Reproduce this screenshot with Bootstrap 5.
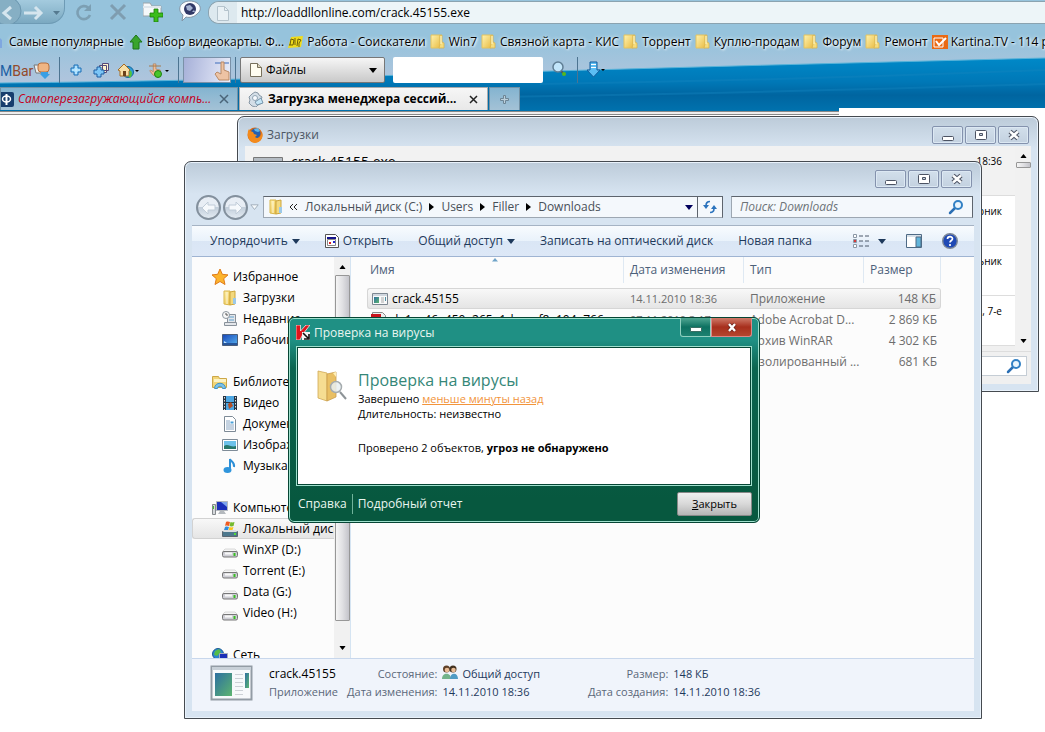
<!DOCTYPE html>
<html lang="ru">
<head>
<meta charset="utf-8">
<meta name="viewport" content="width=device-width, initial-scale=1">
<title>Загрузка менеджера сессий</title>
<link rel="stylesheet" href="https://cdn.jsdelivr.net/npm/bootstrap@5.3.0/dist/css/bootstrap.min.css">
<style>
body{font:12px/16px "Open Sans","Noto Sans",sans-serif;color:#000;background:#fff;min-height:100vh;overflow:hidden}
svg{display:block;flex:none}
button,input,select{font:inherit}
button{background:none;border:0;padding:0;color:inherit}
a{color:inherit;text-decoration:none}
.i16{width:16px;height:16px}
.desk{height:100vh;min-height:732px;overflow:hidden}

/* browser chrome */
.chrome{height:111px;background:linear-gradient(#96c3dc 0 40px,#b2c5dd 85px)}
.chrome .wave{inset:0;width:100%;height:100%}
.torn{right:0;bottom:0;width:19.7%;height:3px;background:#fff}
.navrow{height:27px}
.histpill{width:65px;height:28px;margin-top:-4px;border:1px solid #6e9bb5;border-left:0;border-radius:0 0 16px 0/0 0 16px 0;background:linear-gradient(#a9cfe2,#7ba9c1)}
.navtools{width:143px}
.url{height:23px;border:1px solid #8ba3b0;border-right:0;border-radius:11px 0 0 11px;background:#edf5f8;margin-top:1px}
.urlicon{width:28px;height:21px;background:#dde9ef;border-radius:10px 0 0 10px}
.url input,.plain{border:0;outline:0;background:transparent;padding:0;min-width:0}
.marks{height:30px;gap:4px;text-shadow:0 0 4px #fff,1px 1px 2px #fff}
.marks a{gap:3px}
.tools{height:30px}
.vsep{width:1px;height:26px;background:#4d7491;border-right:0}
.logo{font:14px/20px Roboto,sans-serif;width:33px}
.thumb{width:48px;height:26px;border:1px solid #7a91a8;background:linear-gradient(100deg,#a6b0d8,#e9edfa)}
.filepick{width:145px;height:26px}
.filepick select{appearance:none;width:100%;height:26px;padding:0 0 0 25px;border:1px solid #777;border-radius:2px;background:linear-gradient(#f6f6f6,#c9c9c9);color:#000}
.filepick .leaf{top:5px}
.filepick .caret{top:11px}
.quick{width:150px;height:26px;border:0;border-radius:2px;background:#fff}
.tabstrip{height:23px;gap:1px}
.tab{height:23px;border:1px solid #7191a5;border-bottom:0;background:linear-gradient(#84b4d0,#a4c2d6)}
.tab.on{background:linear-gradient(#f6f6f6,#e8e8e8);border-color:#aaa;font-weight:700}
.t1{width:238px}.t2{width:249px}.t3{width:31px}
.understrip{width:80.3%;height:4px;background:#eee;border-top:1px solid #888;border-bottom:1px solid #888}

/* aero windows */
.win{border:1px solid #454a50;border-radius:7px 7px 0 0;background:linear-gradient(#bccbd9,#d7e4f1 32px);box-shadow:inset 0 0 0 1px #e9f2fb;padding:0 7px 7px}
.cap{width:31px;height:18px;border:1px solid #8492ad;border-radius:2px;background:linear-gradient(#d2dfeb,#c3d1e0);box-shadow:inset 0 0 0 1px #dce8f3}
.caps{gap:2px;margin-right:2px}
.dl{left:237px;right:6px;top:116px;height:276px}
.dl .titlebar{height:29px;color:#4c5663;padding:7px 0 0 2px}
.dlbody{height:238px;background:#f0f0f0}
.dllist{height:206px;border-bottom:1px solid #ddd}
.dlrow{height:50px;border-bottom:1px solid #ddd;background:#fff;padding:7px 13px 0 8px;font-size:10px}
.dlrow:first-child{background:#f2f2f2}
.dlname{font-size:14px;line-height:18px}
.dlfind{width:240px;height:20px;border:1px solid #c5cdd5;background:#fff}
.vbar{width:16px;background:#f1f1f1}
.grip{width:15px;border:1px solid #979797;border-radius:1px;background:linear-gradient(90deg,#f5f5f5,#e0e0e3 50%,#c4c4ca)}

.ex{left:184px;right:63px;top:161px}
.ex .titlebar{height:34px;padding-top:8px}
.addrrow{height:22px;padding-right:1px}
.round{width:25px;height:25px;border:2px solid #83909d;border-radius:50%;background:linear-gradient(#e8eef5 45%,#c3cfdb 50%,#e2eaf2)}
.field{height:22px;border:1px solid #9da7b2;border-top-color:#5d646d;border-right-color:#5d646d;background:#f4f8fc;color:#484f58}
.crumbs{gap:7px}
.find{flex:0 0 242px}
.find input{font-style:italic;color:#5f666e}
.find input::placeholder{color:#6d7378;opacity:1}
.cmd{height:32px;margin-top:7px;padding:0 16px 0 18px;border-top:1px solid #a5b3c4;border-bottom:1px solid #9fb4d2;background:linear-gradient(#f8fbfe,#e9f2fb 50%,#dae6f5 51%,#dde8f7);color:#1e395b}
.panes{height:401px;background:#fcfcfc}
.side{width:142px;padding-top:9px}
.side a{height:21px;gap:5px;white-space:nowrap;padding-left:20px}
.side a.sub{padding-left:30px}
.side a.sel{background:linear-gradient(#f8f8f8,#e5e5e5);border:1px solid #d2d2d2;border-right:0;border-radius:3px 0 0 3px;padding-left:29px}
.side .gap{height:21px}
.side + .vbar{padding:8px 0}
.side + .vbar .grip{margin-top:6px;height:346px}
.listing{border-left:1px solid #d5e4f2;padding-left:16px}
.files{width:574px;table-layout:fixed;border-collapse:separate;border-spacing:0;color:#6d6d6d}
.files th{height:26px;font-weight:400;color:#4c607a;border-right:1px solid #dfe9f3;padding:0 6px 0 6px}
.files th:first-child{padding-left:3px}
.files td{height:21px;padding:0 6px;white-space:nowrap;overflow:hidden}
.files td:first-child{padding-left:4px;color:#000}
.files td:nth-child(2){font-size:11px}
.files td:last-child{text-align:right;padding:0 4px 0 0}
.files .space td{height:5px}
.files .sel td{border:solid #d6d6d6;border-width:1px 0;background:linear-gradient(#f8f8f8,#e5e5e5)}
.files .sel td:first-child{border-left-width:1px;border-radius:3px 0 0 3px}
.files .sel td:last-child{border-right-width:1px;border-radius:0 3px 3px 0}
.info{height:53px;border-top:1px solid #c8d7ec;background:#f0f4fb;color:#5a6779;padding:6px 0 0 17px;font-size:11px}
.info dl,.info dd,.info dt{margin:0;font-weight:400}
.info dl{display:grid;grid-template-columns:auto auto;column-gap:5px;align-content:start;line-height:18px}
.info dt{text-align:right}
.info dd{color:#1e395b}
.info .what{width:78px;line-height:18px}
.info .fname{font-size:12px;color:#000}

/* antivirus dialog */
.av{left:288px;top:317px;width:472px;border:1px solid #064534;border-radius:6px;background:linear-gradient(#1f9084 0 22px,#0b6550 50px,#07583f 180px);box-shadow:inset 0 0 0 1px #9fe0cd;padding:0 7px;color:#e9f6f0}
.av .titlebar{height:28px;padding:1px 0 0}
.avmin,.avx{height:19px;border:1px solid #8fd0c0;border-top:0;margin-top:-1px}
.avmin{width:31px;background:linear-gradient(#4fa692,#0d7161 50%,#1d8171);border-radius:0 0 0 3px}
.avx{width:41px;background:linear-gradient(#cf7a69,#a72f1c 50%,#b5462e);border-color:#d88;border-radius:0 0 3px 0}
.avbody{height:140px;border:1px solid #9fe0cd;outline:1px solid #064534;outline-offset:-2px;background:#fff;color:#000;font-size:11px;line-height:15px;padding:22px 0 0 19px}
.avbody h1{font-size:16px;line-height:22px;font-weight:400;color:#358778;margin:0}
.avbody a{color:#f2943b;text-decoration:underline}
.avbody p{margin:19px 0 0}
.avfoot{height:36px;padding:0 0 1px 2px;gap:5px}
.avfoot .bar{width:1px;height:20px;background:#70b39b}
.avclose{width:75px;height:24px;border:1px solid #888;border-radius:2px;background:linear-gradient(#f0f0f0,#d8d8d8 50%,#b5b5b5);color:#000;font-size:11px}
</style>
</head>
<body>
<svg width="0" height="0" class="position-absolute" aria-hidden="true">
<defs>
<linearGradient id="gy" x2="1" y2="1"><stop stop-color="#fff3b0"/><stop offset="1" stop-color="#e9bd45"/></linearGradient>
<linearGradient id="gb" x2="1" y2="1"><stop stop-color="#1746b8"/><stop offset="1" stop-color="#58b4f0"/></linearGradient>
<linearGradient id="gw" x2="0" y2="1"><stop stop-color="#0089c8"/><stop offset=".45" stop-color="#0078b7"/><stop offset=".7" stop-color="#0065a0"/><stop offset="1" stop-color="#0072ae"/></linearGradient>
<linearGradient id="gg" x2="1" y2="1"><stop stop-color="#2d6fa0"/><stop offset="1" stop-color="#5cb470"/></linearGradient>
</defs>
<symbol id="folder" viewBox="0 0 16 16"><path d="M1 1h9v13H1z" fill="url(#gy)" stroke="#e3c25e"/><path d="M10 1h2v7l2 1v5H9l1-4z" fill="#f6dc7c" stroke="#d9b34c" stroke-width=".8"/><path d="M11 2v8" stroke="#fff8cc"/></symbol>
<symbol id="folderb" viewBox="0 0 16 16"><path d="M2 1h6v14l-6-1z" fill="url(#gy)" stroke="#d9b64a"/><path d="M8 2l5-1v13l-5 1z" fill="#f3d97e" stroke="#cda63c"/><path d="M11 8h3v6h-3z" fill="#9cc9e8"/><path d="M5 2v12" stroke="#fffbe0"/></symbol>
<symbol id="page" viewBox="0 0 16 16"><path d="M2.500 1.500h7l4 4v9h-11z" fill="#fffdf0" stroke="#77705c"/><path d="M9.500 1.500v4h4" fill="#ddd6bd" stroke="#77705c"/></symbol>
<symbol id="drive" viewBox="0 0 16 16"><path d="M3 7h10l2.500 2.500h-15z" fill="#f5f5f5" stroke="#ccc" stroke-width=".7"/><rect x=".5" y="9.500" width="15" height="5.500" rx="1.500" fill="#cfcfd6" stroke="#777"/><path d="M3 11.500h7" stroke="#f8f8f8" stroke-width="2"/><path d="M11.500 11h2v3h-2z" fill="#38bd22"/></symbol>
<symbol id="app" viewBox="0 0 16 16"><path d="M.5 2.500h15v11H.5z" fill="#f8f9fa" stroke="#7d8791"/><path d="M1 3h14v2H1z" fill="#cfd6de"/><path d="M2 6h5v6H2z" fill="url(#gg)"/><path d="M9 7h3M9 9h3M9 11h3" stroke="#aaa"/><path d="M13 6h1v4h-1z" fill="#4f8fa0"/></symbol>
<symbol id="mag" viewBox="0 0 16 16"><path d="M2 14l5-5" stroke="#2b6fb4" stroke-width="2.500" stroke-linecap="round"/><circle cx="10" cy="6" r="4" fill="#eaf5fd" stroke="#3280c4" stroke-width="2"/></symbol>
<symbol id="plus" viewBox="0 0 16 16"><path d="M6 3h4v3h3v4h-3v3H6v-3H3V6h3z" fill="#8fd2fb" stroke="#1c6fb5"/><path d="M8 4v8M4 8h8" stroke="#d5f1ff"/></symbol>
<symbol id="cmin" viewBox="0 0 12 12"><rect x=".5" y="7.500" width="11" height="4" rx="1" fill="#fff" stroke="#4c5363"/></symbol>
<symbol id="cmax" viewBox="0 0 12 12"><rect x=".5" y="1.500" width="11" height="9" rx="1" fill="#fff" stroke="#4c5363"/><path d="M4.500 4.500h3v2h-3z" fill="#c7d3e0" stroke="#4c5363"/></symbol>
<symbol id="cx" viewBox="0 0 12 12"><path d="M2 2.500l8 7M10 2.500l-8 7" stroke="#4c5363" stroke-width="4.600"/><path d="M2 2.500l8 7M10 2.500l-8 7" stroke="#fff" stroke-width="2.500"/></symbol>
<symbol id="dn" viewBox="0 0 8 5"><path d="M0 0h8L4 5z" fill="currentColor"/></symbol>
<symbol id="up" viewBox="0 0 8 5"><path d="M0 5h8L4 0z" fill="currentColor"/></symbol>
<symbol id="rt" viewBox="0 0 5 8"><path d="M0 0l5 4-5 4z" fill="#000"/></symbol>
<symbol id="hand" viewBox="0 0 16 16"><path d="M6 1h3v6l5 1v6H6L2 9l1-1 3 2z" fill="#f0bf98" stroke="#b27b53" stroke-width=".8"/></symbol>
</svg>

<main class="desk position-relative">
<header class="chrome position-relative">
  <svg class="wave position-absolute" viewBox="0 0 1045 111" preserveAspectRatio="none" aria-hidden="true"><path d="M0 83Q200 81 480 73T1045 58V111H0z" fill="url(#gw)"/><path d="M0 83Q200 81 480 73T1045 58" fill="none" stroke="#58b3d9"/><path d="M500 97Q800 92 1045 84M540 84Q800 80 1045 70" stroke="#1585bf" stroke-width="2" opacity=".4" fill="none"/></svg>
  <div class="torn position-absolute"></div>

  <nav class="navrow d-flex align-items-start position-relative" aria-label="Навигация">
    <div class="histpill d-flex">
      <svg width="64" height="27" viewBox="0 0 64 27"><circle cx="7" cy="14" r="14" fill="#86afc4" stroke="#6b97b0"/><path d="M11 10l-7 6 7 6" fill="none" stroke="#d5e5ee" stroke-width="3"/><path d="M24 16h16M35 10l6 6-6 6" fill="none" stroke="#d5e5ee" stroke-width="3"/><path d="M53 14h7l-3.500 4z" fill="#557a90"/></svg>
    </div>
    <div class="navtools d-flex align-items-center ps-2 gap-3">
      <button aria-label="Обновить"><svg width="20" height="22" viewBox="0 0 20 22"><path d="M15.500 8a6.500 6.500 0 1 0 1.500 7" fill="none" stroke="#7c9fb3" stroke-width="2.600"/><path d="M18 4v7h-7z" fill="#7c9fb3"/></svg></button>
      <button aria-label="Стоп"><svg width="18" height="22" viewBox="0 0 18 22"><path d="M2 5l14 14M16 5L2 19" stroke="#7f9db0" stroke-width="3"/></svg></button>
      <button aria-label="Новая вкладка"><svg width="20" height="22" viewBox="0 0 20 22"><path d="M0 5V3h7l2 3h9v10H0z" fill="#f5f8fa" stroke="#9aa4ab"/><path d="M0 6h18v2H0z" fill="#e0e7ec"/><path d="M11 9h4v4h5v4h-5v5h-4v-5H7v-4h4z" fill="#3bbd1c" stroke="#197c0a" stroke-width=".8"/></svg></button>
      <button class="ms-n1" aria-label="Перевод"><svg width="22" height="22" viewBox="0 0 22 22"><path d="M3 21l1-6C-3 9 2 1 11 1s14 8 7 13c-3 3-7 4-11 3z" fill="#fafcff" stroke="#8294a5"/><circle cx="11" cy="9" r="6" fill="#323a68"/><path d="M7 6l4-1 3 3-3 3-3-1zM13 12l2-2 1 2z" fill="#a5b3d2"/></svg></button>
    </div>
    <label class="url d-flex align-items-center flex-grow-1">
      <span class="urlicon d-flex justify-content-center align-items-center me-1"><svg width="14" height="18" viewBox="0 0 14 18"><path d="M1.500 2.500h7l4 4v10h-11z" fill="#e9f1f5" stroke="#b4c3cc"/><path d="M8.500 2.500v4h4" fill="none" stroke="#b4c3cc"/></svg></span>
      <input class="flex-grow-1" aria-label="Адрес" value="http://loaddllonline.com/crack.45155.exe">
    </label>
  </nav>

  <nav class="marks d-flex align-items-center position-relative text-nowrap overflow-hidden" aria-label="Закладки">
    <a href="#" class="d-flex align-items-center"><svg width="6" height="16" viewBox="0 0 6 16"><path d="M0 4l2 2v8H0z" fill="#7fa7e0"/></svg>Самые популярные</a>
    <a href="#" class="d-flex align-items-center"><svg class="i16"><path d="M8 1l6 7h-3v7H5V8H2z" fill="#39a52d" stroke="#1d7518"/></svg>Выбор видеокарты. Ф...</a>
    <a href="#" class="d-flex align-items-center"><svg class="i16"><path d="M3 3l12-1-2 11-13 1z" fill="#f0dc1c"/><path d="M3 5l3 1-1 5H1M3 5L2 11M7 4v7M10 5l3 1-2 3v4M10 5l-1 7" fill="none" stroke="#6b5f0a"/></svg>Работа - Соискатели</a>
    <a href="#" class="d-flex align-items-center"><svg class="i16"><use href="#folder"/></svg>Win7</a>
    <a href="#" class="d-flex align-items-center"><svg class="i16"><use href="#folder"/></svg>Связной карта - КИС</a>
    <a href="#" class="d-flex align-items-center"><svg class="i16"><use href="#folder"/></svg>Торрент</a>
    <a href="#" class="d-flex align-items-center"><svg class="i16"><use href="#folder"/></svg>Куплю-продам</a>
    <a href="#" class="d-flex align-items-center"><svg class="i16"><use href="#folder"/></svg>Форум</a>
    <a href="#" class="d-flex align-items-center"><svg class="i16"><use href="#folder"/></svg>Ремонт</a>
    <a href="#" class="d-flex align-items-center"><svg class="i16"><path d="M0 1h16v14H0z" fill="#ea6a14"/><path d="M2 4h9v9H2z" fill="none" stroke="#fff"/><path d="M4 7l3 4 7-7" fill="none" stroke="#fff" stroke-width="2"/></svg>Kartina.TV - 114 р</a>
  </nav>

  <div class="tools d-flex align-items-start position-relative">
    <span class="logo pt-1"><span style="color:#1c5fa3">M</span><span style="color:#934a2a">Bar</span></span>
    <div class="d-flex align-items-center gap-2" style="height:26px">
      <svg width="18" height="18" viewBox="0 0 18 18"><path d="M1 4h7v8H3z" fill="#eee" stroke="#777"/><rect x="5" y="2" width="11" height="9" rx="3" fill="#f0b583" stroke="#b56f3e"/><path d="M8 11h7v2h2l-5 5-5-5h1z" fill="#3a9fe4"/></svg>
      <i class="vsep"></i>
      <button aria-label="Добавить"><svg class="i16"><use href="#plus"/></svg></button>
      <button aria-label="Добавить все"><svg width="18" height="16" viewBox="0 0 18 16"><path d="M7.500 3.500h7v7h-7zM10.500 1.500h6v7h-6z" fill="#fff4cf" stroke="#554a7a"/><path d="M5 5h4v3h3v4H9v3H5v-3H2V8h3z" fill="#7cc6f7" stroke="#1c5fa3"/></svg></button>
      <button aria-label="Домой"><svg width="22" height="16" viewBox="0 0 22 16"><circle cx="10" cy="10" r="5.500" fill="#2f9bd8" stroke="#15699b"/><path d="M0 8l6-6 6 6-1 1v5H2V9z" fill="#f7dfa6" stroke="#a66c22"/><path d="M5 9h3v5H5z" fill="#6c411a"/><path d="M12 9a4 4 0 0 1-1 6" stroke="#52c43b" stroke-width="2" fill="none"/><path d="M17 8h4l-2 2z"/></svg></button>
      <button aria-label="Жест"><svg width="22" height="16" viewBox="0 0 22 16"><use href="#hand" width="14" height="16"/><path d="M1 4h12" stroke="#a27b4f"/><circle cx="10" cy="12" r="3.500" fill="#49c529" stroke="#1d8011"/><path d="M17 8h4l-2 2z"/></svg></button>
      <i class="vsep"></i>
    </div>
    <button class="thumb d-flex justify-content-end ms-1" aria-label="Панель"><svg width="18" height="24" viewBox="0 0 18 24"><path d="M3 5h14" stroke="#3d6dbb"/><path d="M9 4h3v8l5 2v8H7l-4-6 2-2 4 2z" fill="#edc3a4" stroke="#b98a66"/></svg></button>
    <i class="vsep mx-1"></i>
    <label class="filepick position-relative">
      <svg class="leaf i16 position-absolute ms-2"><use href="#page"/></svg>
      <select aria-label="Раздел"><option>Файлы</option></select>
      <svg class="caret position-absolute end-0 me-2" width="8" height="5"><use href="#dn"/></svg>
    </label>
    <input class="quick ms-2" aria-label="Поиск">
    <div class="d-flex align-items-center gap-2 ms-2" style="height:26px">
      <button aria-label="Найти"><svg width="18" height="18" viewBox="0 0 18 18"><path d="M9 9l5 5" stroke="#555" stroke-width="2"/><circle cx="7" cy="6" r="5" fill="#c3e6fb" stroke="#607e94" stroke-width="1.500"/><circle cx="13" cy="13" r="2" fill="#55b81f"/></svg></button>
      <i class="vsep"></i>
      <button aria-label="Загрузить"><svg width="20" height="18" viewBox="0 0 20 18"><path d="M4 1h7v8h3l-6.500 7L1 9h3z" fill="#5bbdf3" stroke="#155d9c"/><path d="M5 3.500h5M5 6.500h5" stroke="#fff"/><path d="M15 8h4l-2 2z"/></svg></button>
    </div>
  </div>

  <div class="tabstrip d-flex position-relative">
    <div class="tab t1 d-flex align-items-center gap-1 pe-2">
      <svg width="13" height="15" viewBox="0 0 13 15"><path d="M0 0h11a2 2 0 0 1 2 2v11a2 2 0 0 1-2 2H0z" fill="#173d6d"/><path d="M5.500 2v11" stroke="#fff" stroke-width="2"/><ellipse cx="5.500" cy="7" rx="4" ry="3" fill="none" stroke="#fff" stroke-width="1.500"/></svg>
      <a href="#" class="flex-grow-1 fst-italic" style="color:#c4001d">Самоперезагружающийся компь...</a>
      <button aria-label="Закрыть вкладку"><svg width="10" height="10"><path d="M1 1l8 8M9 1L1 9" stroke="#4a6478" stroke-width="1.500"/></svg></button>
    </div>
    <div class="tab on t2 d-flex align-items-center gap-1 ps-2 pe-2">
      <svg class="i16"><path d="M7 1l3 1 1 2 3 2-1 3 1 3-4 2-2 2-4-1-3-3 1-3-1-3 3-3z" fill="#d4dee7" stroke="#8797a5"/><circle cx="7" cy="7" r="2.500" fill="#f8fbff" stroke="#91a5b5"/><path d="M7 11l6-4 2 5-6 2z" fill="#c5e6f7" stroke="#7895ab"/></svg>
      <a href="#" class="flex-grow-1">Загрузка менеджера сессий...</a>
      <button aria-label="Закрыть вкладку"><svg width="11" height="9"><path d="M2 1l7 7M9 1L2 8" stroke="#222" stroke-width="1.500"/></svg></button>
    </div>
    <button class="tab t3 d-flex align-items-center justify-content-center" aria-label="Новая вкладка"><svg width="9" height="9"><path d="M3.500.5h2v3h3v2h-3v3h-2v-3h-3v-2h3z" fill="#bdcfda" stroke="#6d8595"/></svg></button>
  </div>
</header>
<div class="understrip"></div>

<section class="win dl position-absolute" aria-label="Загрузки">
  <div class="titlebar d-flex align-items-center gap-1">
    <svg class="i16" viewBox="0 0 16 16"><circle cx="8" cy="8" r="7.500" fill="#dc6a12"/><circle cx="8.500" cy="6.500" r="5" fill="#2660b0"/><path d="M1 4l1-2 1 2 3 1 1 2 3 1-2 2c2 2 5 1 6-2l1-3c2 6-2 11-7 11S0 11 1 4z" fill="#f38a1c"/><path d="M7 2l4-1 2 3-2 1-3-1z" fill="#5fb6ea"/></svg>
    <span class="flex-grow-1">Загрузки</span>
    <div class="caps d-flex">
      <button class="cap d-flex align-items-center justify-content-center" aria-label="Свернуть"><svg width="12" height="12"><use href="#cmin"/></svg></button>
      <button class="cap d-flex align-items-center justify-content-center" aria-label="Развернуть"><svg width="12" height="12"><use href="#cmax"/></svg></button>
      <button class="cap d-flex align-items-center justify-content-center" aria-label="Закрыть"><svg width="12" height="12"><use href="#cx"/></svg></button>
    </div>
  </div>
  <div class="dlbody">
    <div class="dllist d-flex">
      <div class="flex-grow-1">
        <div class="dlrow d-flex justify-content-between"><span class="d-flex gap-2"><svg width="30" height="20" viewBox="0 0 30 20" class="ms-n1 mt-1"><path d="M.5.500h29v19H.5z" fill="#f6f6f6" stroke="#777"/><path d="M1 1h28v3H1z" fill="#b5bcc3"/></svg><span class="dlname">crack.45155.exe</span></span><span>18:36</span></div>
        <div class="dlrow text-end">вторник</div>
        <div class="dlrow text-end">понедельник</div>
        <div class="dlrow text-end">ноября, 7-е</div>
      </div>
      <div class="vbar d-flex flex-column align-items-center py-1"><svg class="mt-1" width="7" height="4" viewBox="0 0 8 5"><use href="#up"/></svg><i class="grip mt-1" style="height:6px"></i><svg class="mt-auto mb-1" width="7" height="4" viewBox="0 0 8 5"><use href="#dn"/></svg></div>
    </div>
    <div class="d-flex justify-content-end pt-1 pe-1"><label class="dlfind d-flex align-items-center px-1"><input class="plain flex-grow-1" aria-label="Поиск загрузок"><svg class="i16"><use href="#mag"/></svg></label></div>
  </div>
</section>

<section class="win ex position-absolute" aria-label="Downloads">
  <div class="titlebar d-flex justify-content-end align-items-start">
    <div class="caps d-flex">
      <button class="cap d-flex align-items-center justify-content-center" aria-label="Свернуть"><svg width="12" height="12"><use href="#cmin"/></svg></button>
      <button class="cap d-flex align-items-center justify-content-center" aria-label="Развернуть"><svg width="12" height="12"><use href="#cmax"/></svg></button>
      <button class="cap d-flex align-items-center justify-content-center" aria-label="Закрыть"><svg width="12" height="12"><use href="#cx"/></svg></button>
    </div>
  </div>
  <div class="addrrow d-flex align-items-center">
    <div class="d-flex align-items-center ps-1 me-1" style="gap:2px">
      <button class="round" aria-label="Назад"><svg width="21" height="21"><path d="M4 11l6-6v3h7v5h-7v4z" fill="#f6f9fc" stroke="#c0ccd8"/></svg></button>
      <button class="round" aria-label="Вперед"><svg width="21" height="21"><path d="M17 11l-6-6v3H4v5h7v4z" fill="#f6f9fc" stroke="#c0ccd8"/></svg></button>
      <svg width="9" height="7"><path d="M.8.800h7.400L4.500 5.500z" fill="#f5f9fc" stroke="#a3b0bd"/></svg>
    </div>
    <div class="field crumbs d-flex align-items-center flex-grow-1 px-1">
      <svg width="14" height="18" viewBox="0 0 14 16"><use href="#folderb" width="16" height="16"/></svg>
      <svg width="9" height="8"><path d="M4 1L1 4l3 3M8 1L5 4l3 3" fill="none" stroke="#222"/></svg>
      <a href="#">Локальный диск (C:)</a><svg width="5" height="8"><use href="#rt"/></svg>
      <a href="#">Users</a><svg width="5" height="8"><use href="#rt"/></svg>
      <a href="#">Filler</a><svg width="5" height="8"><use href="#rt"/></svg>
      <a href="#">Downloads</a>
      <svg class="ms-auto" width="8" height="5" style="color:#00005c"><use href="#dn"/></svg>
    </div>
    <button class="field border-start-0 px-1" aria-label="Обновить"><svg width="16" height="16"><path d="M8 2.500C5 2.500 4 4 4 7M8 13.500c3 0 4-2 4-4" fill="none" stroke="#2b73bd" stroke-width="1.600"/><path d="M1 6h6l-3 4zM9 10h6l-3-4z" fill="#2b73bd"/></svg></button>
    <label class="field find d-flex align-items-center ms-2 px-2"><input class="plain flex-grow-1" aria-label="Поиск" placeholder="Поиск: Downloads"><svg class="i16 me-n1"><use href="#mag"/></svg></label>
  </div>
  <div class="cmd d-flex align-items-center justify-content-between">
    <button class="d-flex align-items-center gap-1">Упорядочить<svg width="8" height="5"><use href="#dn"/></svg></button>
    <button class="d-flex align-items-center gap-1"><svg width="14" height="16" viewBox="0 0 14 16"><path d="M.5 1.500h10l3 3v10H.5z" fill="#fff" stroke="#555"/><path d="M2 4h9v2H2z" fill="#12128b"/><path d="M2.500 6.500h8v6h-8z" fill="#fff" stroke="#888"/><path d="M4 9h2v2H4z" fill="#d22"/><path d="M8 8h2v2H8z" fill="#22c"/></svg>Открыть</button>
    <button class="d-flex align-items-center gap-1">Общий доступ<svg width="8" height="5"><use href="#dn"/></svg></button>
    <button>Записать на оптический диск</button>
    <button>Новая папка</button>
    <span class="d-flex align-items-center gap-3 ms-3">
      <button class="d-flex align-items-center gap-2" aria-label="Вид"><svg width="17" height="14"><path d="M.5.500h3v3h-3zM.5 5.500h3v3h-3zM.5 10.500h3v3h-3z" fill="#fff" stroke="#8a97a5"/><path d="M6 2h4M12 2h4M6 7h4M12 7h4M6 12h4M12 12h4" stroke="#4c596b"/><path d="M1 6h2v2H1z" fill="#d43b3b"/></svg><svg width="8" height="5"><use href="#dn"/></svg></button>
      <button aria-label="Область просмотра"><svg class="ms-1" width="16" height="14"><path d="M.5.500h15v13H.5z" fill="#fff" stroke="#4e6a85"/><path d="M1 1h14v2H1z" fill="#d7e0e8"/><path d="M10 3h5v10h-5z" fill="#63b5da" stroke="#4e6a85"/></svg></button>
      <button aria-label="Справка"><svg class="i16 ms-1" viewBox="0 0 16 16"><circle cx="8" cy="8" r="7.300" fill="#1f49b5" stroke="#7d8897" stroke-width="1.400"/><path d="M5.500 6c0-3 5-3 5-.3C10.500 7.500 8 7.500 8 9.500M8 11v2" fill="none" stroke="#fff" stroke-width="1.700"/></svg></button>
    </span>
  </div>

  <div class="panes d-flex overflow-hidden">
    <nav class="side flex-shrink-0 overflow-hidden" aria-label="Папки">
      <a href="#" class="d-flex align-items-center"><svg class="i16"><path d="M8 0l2.300 5.300 5.700.6-4.300 3.800L13 15.500 8 12.500l-5 3 1.300-5.800L0 5.900l5.700-.6z" fill="#fcb42d" stroke="#df7b1a"/></svg>Избранное</a>
      <a href="#" class="sub d-flex align-items-center"><svg class="i16"><use href="#folderb"/></svg>Загрузки</a>
      <a href="#" class="sub d-flex align-items-center"><svg class="i16"><path d="M5.500 3.500h8v8h-8zM2.500 11.500h12v3h-12z" fill="#e3e6ea" stroke="#89929b"/><path d="M7 6h5M7 9h5" stroke="#5fa1cf"/><circle cx="4" cy="4" r="3.500" fill="#f8f8f8" stroke="#8d969e"/><path d="M4 2v2h2" fill="none" stroke="#555"/></svg>Недавние</a>
      <a href="#" class="sub d-flex align-items-center"><svg class="i16"><path d="M.5 2.500h15v11H.5z" fill="url(#gb)" stroke="#4a5d7a"/><path d="M1 11h14v2H1z" fill="#27559a"/><path d="M2 9l3 2H2z" fill="#bfe4fa"/></svg>Рабочий</a>
      <div class="gap"></div>
      <a href="#" class="d-flex align-items-center"><svg class="i16"><path d="M.5 2.500h6l1 2h7v9H.5z" fill="#f1d579" stroke="#cda747"/><path d="M2 5h12v3H2z" fill="#fdf3c4"/><path d="M2.500 14.500c0-7 11-7 11 0h-3c0-3-5-3-5 0z" fill="#7cc2ea" stroke="#4695c4"/></svg>Библиотеки</a>
      <a href="#" class="sub d-flex align-items-center"><svg class="i16"><path d="M1 1h14v14H1z" fill="#263341"/><path d="M4 1h8v6H4zM4 8h8v7H4z" fill="#4da6e2"/><path d="M6 9l3-2 2 4-4 3z" fill="#b44f27"/><path d="M2.500 2v13M13.500 2v13" stroke="#ddd" stroke-dasharray="1.500 1.500"/></svg>Видео</a>
      <a href="#" class="sub d-flex align-items-center"><svg class="i16"><path d="M2.500.500h8l3 3v12h-11z" fill="#fff" stroke="#7d8a96"/><path d="M4 5h4M4 7h4M4 9h8M4 11h8M4 13h8" stroke="#8aa6c3"/><path d="M8.500 5.500h3v2h-3z" fill="#49a0d8"/></svg>Документы</a>
      <a href="#" class="sub d-flex align-items-center"><svg class="i16"><path d="M.5 2.500h15v11H.5z" fill="#fff" stroke="#7f8c98"/><path d="M2 4h12v8H2z" fill="#6cc1ea"/><path d="M2 9c4-3 7 2 12 0v3H2z" fill="#26776b"/></svg>Изображения</a>
      <a href="#" class="sub d-flex align-items-center"><svg class="i16"><path d="M8 12V1c1 3 5 3 4 8" fill="none" stroke="#2d8fd6" stroke-width="2"/><ellipse cx="5.500" cy="12" rx="4" ry="3" fill="#2f95dc"/></svg>Музыка</a>
      <div class="gap"></div>
      <a href="#" class="d-flex align-items-center"><svg class="i16"><path d="M.5 4.500h3v10h-3z" fill="#d5d8db" stroke="#85898d"/><path d="M1 6h1v3H1z" fill="#3fbf2b"/><path d="M4.500 1.500h11v9h-11z" fill="#1a2fb8" stroke="#b3b8bd"/><path d="M9 2h6v5z" fill="#7da4ee"/><path d="M8 11h4l2 3H6z" fill="#b4b9be"/></svg>Компьютер</a>
      <a href="#" class="sub sel d-flex align-items-center"><svg class="i16"><path d="M.5 10.500h15v5H.5z" fill="#4d788d" stroke="#5b6670"/><path d="M2 9h12l1 2H1z" fill="#dadde0"/><path d="M4 1c2-1 3 0 4 0L7 5C6 5 5 4 3 5z" fill="#ef5b21"/><path d="M8.500 1c2 1 3 0 4 0l-1 4c-1 0-2 1-4 0z" fill="#73b92c"/><path d="M3 6c2-1 3 0 4 0L6 9H2z" fill="#2f8ddd"/><path d="M7.500 6c2 1 3 0 4 0l-1 3h-4z" fill="#fbc31c"/><path d="M12 12h2v2h-2z" fill="#55da38"/></svg>Локальный диск</a>
      <a href="#" class="sub d-flex align-items-center"><svg class="i16"><use href="#drive"/></svg>WinXP (D:)</a>
      <a href="#" class="sub d-flex align-items-center"><svg class="i16"><use href="#drive"/></svg>Torrent (E:)</a>
      <a href="#" class="sub d-flex align-items-center"><svg class="i16"><use href="#drive"/></svg>Data (G:)</a>
      <a href="#" class="sub d-flex align-items-center"><svg class="i16"><use href="#drive"/></svg>Video (H:)</a>
      <div class="gap"></div>
      <a href="#" class="d-flex align-items-center"><svg class="i16"><circle cx="6" cy="7" r="5.500" fill="#2b85d0" stroke="#1b5b94"/><path d="M3 4l4-2 2 3-4 4-3-1z" fill="#56bd47"/><path d="M7.500 6.500h8v7h-8z" fill="#1a2fb8" stroke="#a9afb8"/></svg>Сеть</a>
    </nav>
    <div class="vbar d-flex flex-column align-items-center flex-shrink-0"><svg width="7" height="4" viewBox="0 0 8 5"><use href="#up"/></svg><i class="grip"></i><svg class="mt-auto" width="7" height="4" viewBox="0 0 8 5"><use href="#dn"/></svg></div>
    <div class="listing flex-grow-1 position-relative">
      <table class="files">
        <colgroup><col style="width:257px"><col style="width:120px"><col style="width:120px"><col style="width:77px"></colgroup>
        <thead><tr><th>Имя</th><th>Дата изменения</th><th>Тип</th><th>Размер</th></tr></thead>
        <tbody>
        <tr class="space"><td colspan="4"></td></tr>
        <tr class="sel"><td><span class="d-flex align-items-center gap-1"><svg class="i16"><use href="#app"/></svg>crack.45155</span></td><td>14.11.2010 18:36</td><td>Приложение</td><td>148 КБ</td></tr>
        <tr><td><span class="d-flex align-items-center gap-1"><svg class="i16"><path d="M1.500.500h10l3 3v12h-13z" fill="#eee" stroke="#888"/><path d="M0 2h10v5H0z" fill="#c8141c"/></svg>de1ac46e450a265a1dcaecf8a104a766</span></td><td>07.11.2010 3:17</td><td>Adobe Acrobat D...</td><td>2 869 КБ</td></tr>
        <tr><td></td><td></td><td>Архив WinRAR</td><td>4 302 КБ</td></tr>
        <tr><td></td><td></td><td>Изолированный ...</td><td>681 КБ</td></tr>
        </tbody>
      </table>
      <svg class="position-absolute top-0" style="left:140px" width="8" height="5" viewBox="0 0 8 5"><path d="M1 4.500L4 1l3 3.500z" fill="#6fa3c8"/></svg>
    </div>
  </div>

  <footer class="info d-flex">
    <svg width="44" height="38" viewBox="0 0 44 38" class="me-3"><path d="M2.500 1.500h40v33h-40z" fill="#f7f9fb" stroke="#939ca5" stroke-width="2"/><path d="M3 2h39v3H3z" fill="#c8d0d8"/><path d="M6 8h17v23H6z" fill="url(#gg)"/><path d="M26 9.500h8M26 13.500h8M26 17.500h8M26 21.500h8M26 25.500h8M26 29.500h8" stroke="#ccd1d6"/><path d="M36 8h4v15h-4z" fill="url(#gg)"/></svg>
    <div class="what"><div class="fname">crack.45155</div><div>Приложение</div></div>
    <dl><dt>Состояние:</dt><dd class="d-flex gap-1"><svg class="i16"><circle cx="4.500" cy="4" r="3.500" fill="#5f4028"/><circle cx="11" cy="4" r="3.500" fill="#42301f"/><circle cx="5" cy="5" r="2.300" fill="#e9bc95"/><circle cx="11.500" cy="5" r="2.300" fill="#e9bc95"/><path d="M0 14c0-7 9-7 9 0z" fill="#72b38a"/><path d="M8 14c0-7 8-7 8 0z" fill="#4f9bc4"/></svg>Общий доступ</dd><dt>Дата изменения:</dt><dd>14.11.2010 18:36</dd></dl>
    <dl class="ms-5"><dt>Размер:</dt><dd>148 КБ</dd><dt>Дата создания:</dt><dd>14.11.2010 18:36</dd></dl>
  </footer>
</section>

<section class="av position-absolute" role="dialog" aria-label="Проверка на вирусы">
  <div class="titlebar d-flex align-items-center gap-1">
    <svg class="flex-shrink-0" width="14" height="15" viewBox="0 0 14 15"><path d="M0 0h4.500v6L10 0h4L7 9l-3 6H0z" fill="#e0161d" stroke="#fff" stroke-width=".7"/><path d="M6 7h8v8H6z" fill="#f4f4f4"/><path d="M7 8l5 5M13 9v5H8" fill="none" stroke="#111" stroke-width="1.600"/></svg>
    <span class="flex-grow-1">Проверка на вирусы</span>
    <span class="d-flex align-self-start"><button class="avmin d-flex justify-content-center align-items-end pb-1" aria-label="Свернуть"><svg width="12" height="5"><path d="M.5.500h11v4H.5z" fill="#fff" stroke="#3a6f64"/></svg></button><button class="avx d-flex justify-content-center align-items-center" aria-label="Закрыть"><svg width="10" height="9"><path d="M2 1l6 7M8 1L2 8" stroke="#6d2117" stroke-width="4"/><path d="M2 1l6 7M8 1L2 8" stroke="#fff" stroke-width="2.400"/></svg></button></span>
  </div>
  <div class="avbody d-flex gap-2">
    <svg width="34" height="34" viewBox="0 0 34 34"><path d="M2 2l9 2v28l-9-3z" fill="#f6dd92" stroke="#d0a854" stroke-width=".8"/><path d="M11 5l9-2v25l-9 4z" fill="#e9bf63" stroke="#c99d4c" stroke-width=".8"/><path d="M17 4l3-1v5z" fill="#fff0b8"/><circle cx="20" cy="18" r="5.500" fill="#e8eef1" fill-opacity=".85" stroke="#a5abae" stroke-width="1.500"/><path d="M24 23l6 7" stroke="#8d9397" stroke-width="2"/></svg>
    <div>
      <h1>Проверка на вирусы</h1>
      <div>Завершено <a href="#">меньше минуты назад</a></div>
      <div>Длительность: неизвестно</div>
      <p>Проверено 2 объектов, <b>угроз не обнаружено</b></p>
    </div>
  </div>
  <div class="avfoot d-flex align-items-center">
    <a href="#">Справка</a><i class="bar"></i><a href="#" class="flex-grow-1">Подробный отчет</a>
    <button class="avclose"><u>З</u>акрыть</button>
  </div>
</section>
</main>
<script src="https://cdn.jsdelivr.net/npm/bootstrap@5.3.0/dist/js/bootstrap.bundle.min.js"></script>
</body>
</html>
